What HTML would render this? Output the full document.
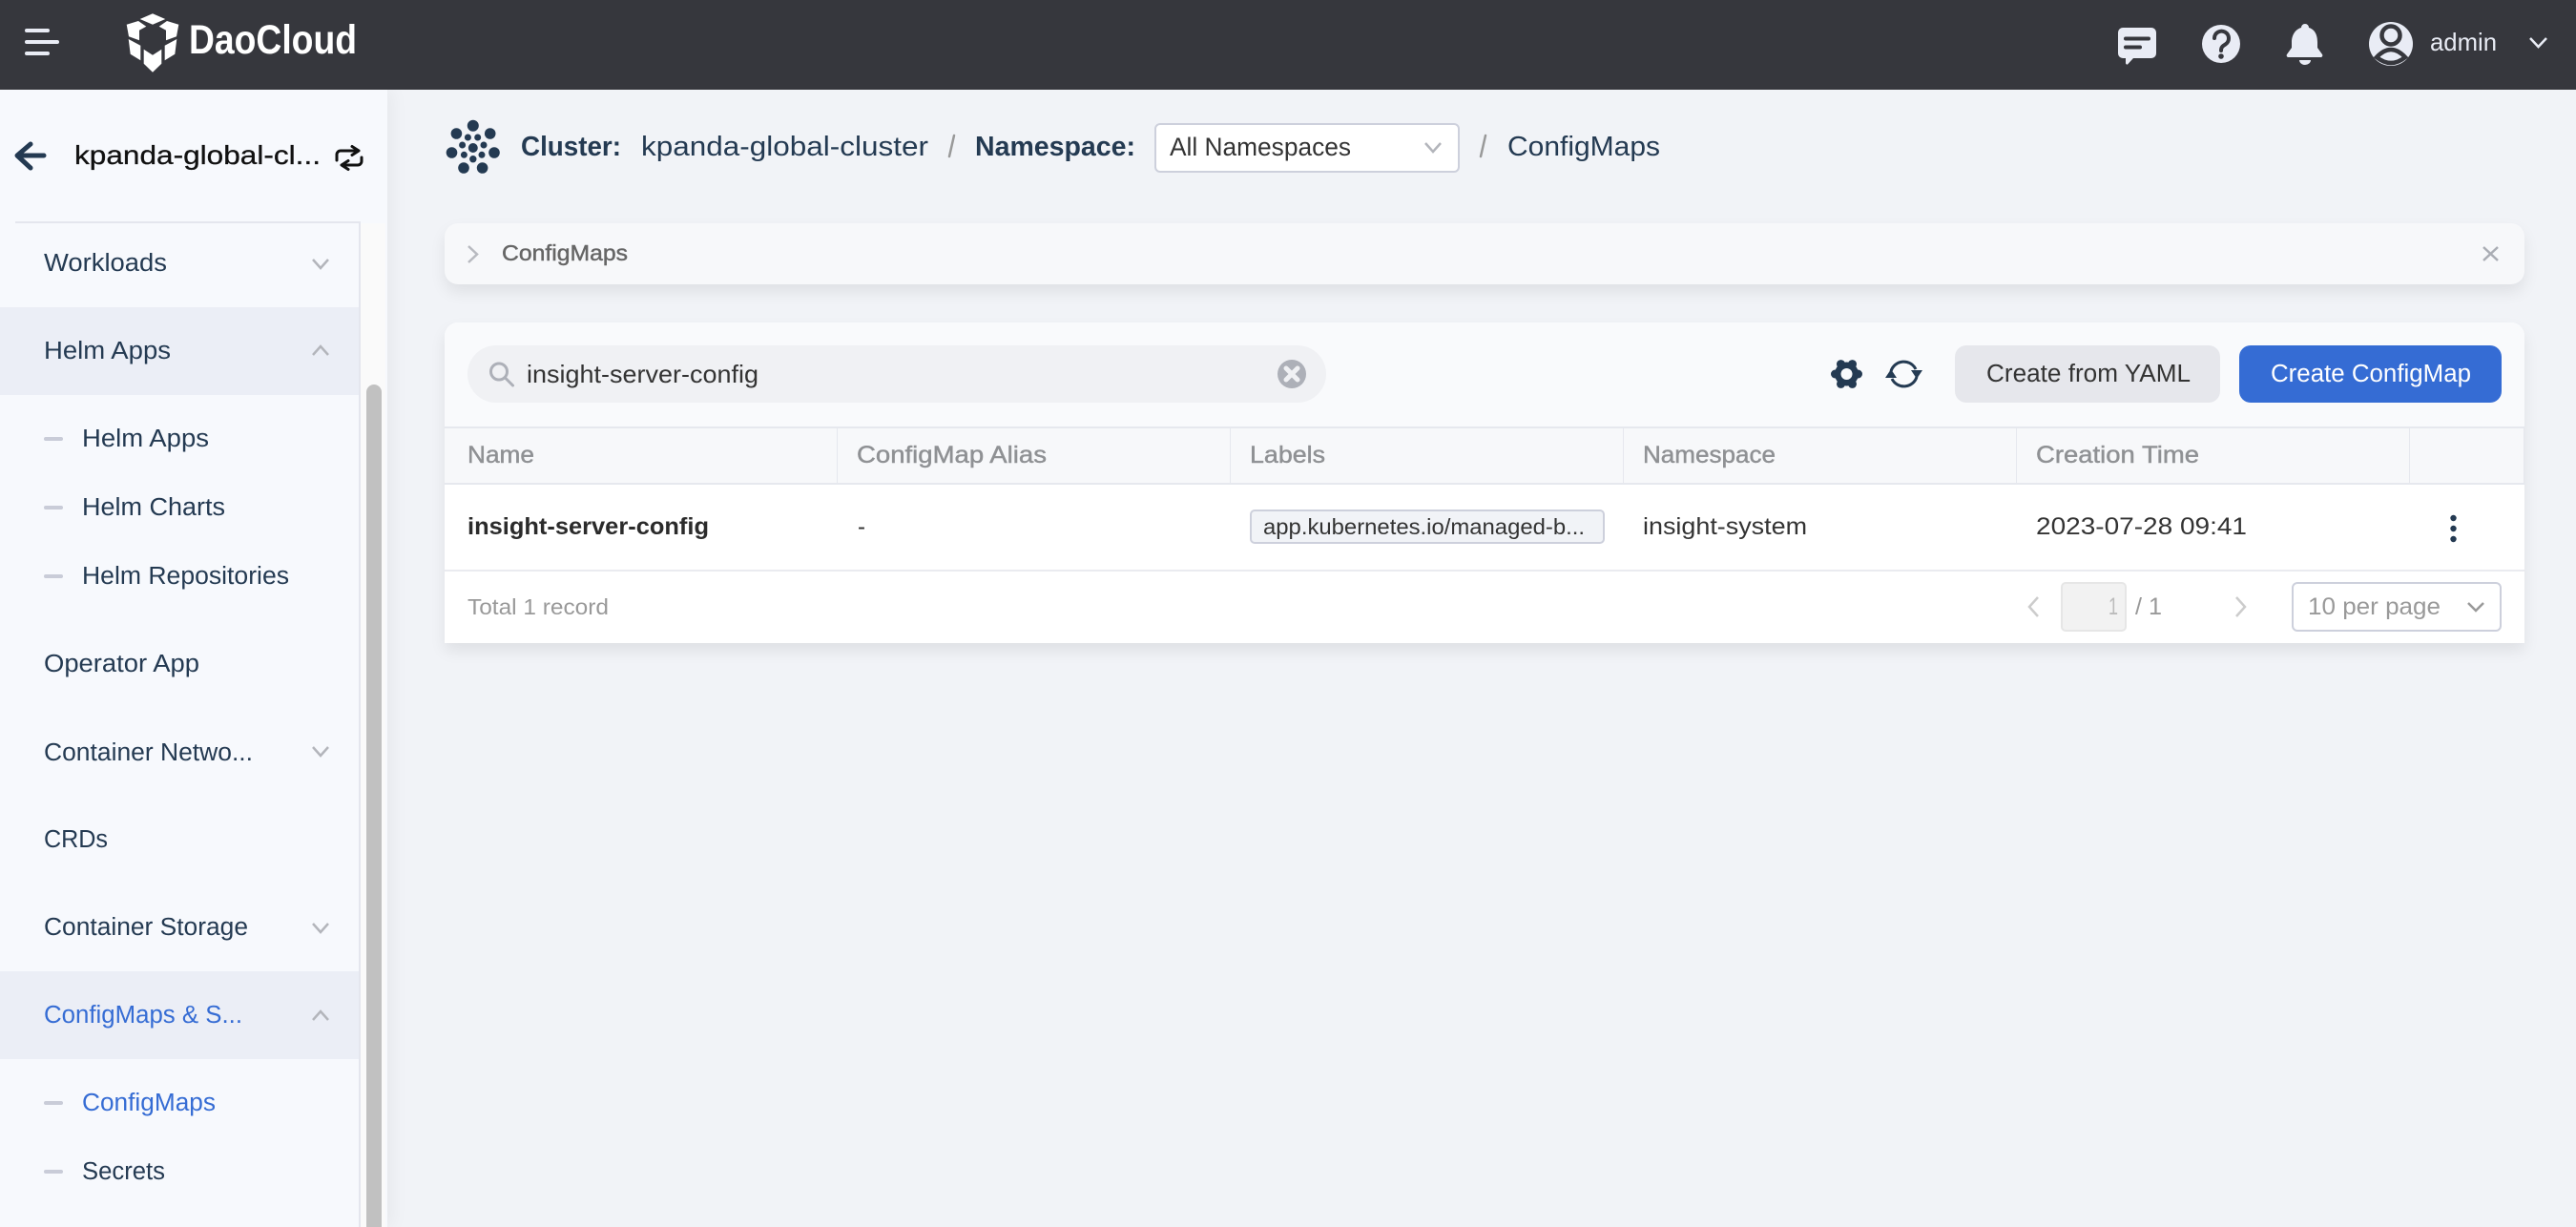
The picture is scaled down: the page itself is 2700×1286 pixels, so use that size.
<!DOCTYPE html>
<html lang="en">
<head>
<meta charset="utf-8">
<title>ConfigMaps - DaoCloud</title>
<style>
html,body{margin:0;padding:0;width:2700px;height:1286px;overflow:hidden;background:#f1f3f7}
.b{position:absolute;box-sizing:border-box}
svg{position:absolute;left:0;top:0}
text{font-family:"Liberation Sans",sans-serif;white-space:pre}
.s{font-size:25.5px;fill:#243a52}
.bl{fill:#356cd4}
.th{font-size:25px;fill:#8f9194;stroke-width:.45px;stroke:#8f9194}
.td{font-size:25px;fill:#333}
</style>
</head>
<body>
<!-- sidebar -->
<div class="b" style="left:0;top:94px;width:406px;height:1192px;background:#f7f9fd;box-shadow:4px 0 18px rgba(0,0,0,.05)"></div>
<div class="b" style="left:378px;top:234px;width:26px;height:1052px;background:#fafafa"></div>
<div class="b" style="left:16px;top:232px;width:360px;height:2px;background:#e4e6ee"></div>
<div class="b" style="left:376px;top:232px;width:2px;height:1054px;background:#e4e6ee"></div>
<div class="b" style="left:384px;top:403px;width:16px;height:883px;background:#c1c1c1;border-radius:8px 8px 0 0"></div>
<div class="b" style="left:0;top:322px;width:376px;height:92px;background:#ebeef6"></div>
<div class="b" style="left:0;top:1018px;width:376px;height:92px;background:#ebeef6"></div>
<div class="b" style="left:46px;top:458px;width:20px;height:4px;background:#c9ccd8;border-radius:2px"></div>
<div class="b" style="left:46px;top:530px;width:20px;height:4px;background:#c9ccd8;border-radius:2px"></div>
<div class="b" style="left:46px;top:602px;width:20px;height:4px;background:#c9ccd8;border-radius:2px"></div>
<div class="b" style="left:46px;top:1154px;width:20px;height:4px;background:#c9ccd8;border-radius:2px"></div>
<div class="b" style="left:46px;top:1226px;width:20px;height:4px;background:#c9ccd8;border-radius:2px"></div>
<!-- header -->
<div class="b" style="left:0;top:0;width:2700px;height:94px;background:#36373d"></div>
<!-- select -->
<div class="b" style="left:1210px;top:129px;width:320px;height:52px;background:#fff;border:2px solid #cdd0dc;border-radius:6px"></div>
<!-- alert -->
<div class="b" style="left:466px;top:234px;width:2180px;height:64px;background:#f7f8fa;border-radius:14px;box-shadow:0 8px 16px rgba(0,0,0,.08)"></div>
<!-- card -->
<div class="b" style="left:466px;top:338px;width:2180px;height:336px;background:#fff;border-radius:14px 14px 0 0;box-shadow:0 8px 16px rgba(0,0,0,.08)"></div>
<div class="b" style="left:466px;top:338px;width:2180px;height:110px;background:#f9fafc;border-radius:14px 14px 0 0"></div>
<div class="b" style="left:490px;top:362px;width:900px;height:60px;background:#f0f1f4;border-radius:30px"></div>
<div class="b" style="left:2049px;top:362px;width:278px;height:60px;background:#e6e7ec;border-radius:12px"></div>
<div class="b" style="left:2347px;top:362px;width:275px;height:60px;background:#356cd4;border-radius:12px"></div>
<!-- table head -->
<div class="b" style="left:466px;top:447px;width:2180px;height:61px;background:#f7f8fa;border-top:2px solid #e6e8ee;border-bottom:2px solid #e6e8ee"></div>
<div class="b" style="left:877px;top:449px;width:1px;height:57px;background:#e6e8ee"></div>
<div class="b" style="left:1289px;top:449px;width:1px;height:57px;background:#e6e8ee"></div>
<div class="b" style="left:1701px;top:449px;width:1px;height:57px;background:#e6e8ee"></div>
<div class="b" style="left:2113px;top:449px;width:1px;height:57px;background:#e6e8ee"></div>
<div class="b" style="left:2525px;top:449px;width:1px;height:57px;background:#e6e8ee"></div>
<div class="b" style="left:2645px;top:449px;width:1px;height:57px;background:#e6e8ee"></div>
<div class="b" style="left:466px;top:597px;width:2180px;height:2px;background:#eaebf0"></div>
<!-- tag -->
<div class="b" style="left:1310px;top:534px;width:372px;height:36px;background:#f1f3f7;border:2px solid #cdd0dc;border-radius:5px"></div>
<!-- pagination -->
<div class="b" style="left:2160px;top:610px;width:69px;height:52px;background:#f2f2f2;border:2px solid #e6e6e6;border-radius:5px"></div>
<div class="b" style="left:2402px;top:610px;width:220px;height:52px;background:#fff;border:2px solid #cdd0dc;border-radius:6px"></div>

<svg width="2700" height="1286" viewBox="0 0 2700 1286" xmlns="http://www.w3.org/2000/svg">
<!-- hamburger -->
<g stroke="#e9ecf5" stroke-width="4" stroke-linecap="round" fill="none">
<path d="M28 32H50M28 44H60M28 56H50"/>
</g>
<!-- logo -->
<g fill="#fff">
<path d="M146.700 20L160 14.300L173.300 20L160 25.700Z"/>
<path d="M132.700 25.700L145 22L153.300 27.700L146 31.700V42.300L135 38.300Z"/>
<path d="M187.300 25.700L175 22L166.700 27.700L174 31.700V42.300L185 38.300Z"/>
<path d="M134.700 41L147.300 47.700V63.300L136.700 56.700Z"/>
<path d="M185.300 41L172.700 47.700V63.300L183.300 56.700Z"/>
<path d="M150.700 51.700L160 57.700L169.300 51.700V66.700L160 75.700L150.700 66.700Z"/>
</g>
<text x="198" y="56" font-size="43" font-weight="700" fill="#fff" textLength="176" lengthAdjust="spacingAndGlyphs">DaoCloud</text>

<!-- header right -->
<path d="M2225 29H2255A5 5 0 0 1 2260 34V56A5 5 0 0 1 2255 61H2236L2230 67.500A1.500 1.500 0 0 1 2228 66V61H2225A5 5 0 0 1 2220 56V34A5 5 0 0 1 2225 29Z" fill="#e9ecf5"/>
<path d="M2228 40.500H2252M2228 49.500H2243" stroke="#36373d" stroke-width="4" stroke-linecap="round" fill="none"/>
<circle cx="2328" cy="46" r="20" fill="#e9ecf5"/>
<path d="M2321 40A7.500 7.500 0 1 1 2332.500 46.500C2329.500 48.300 2328 49.500 2328 53" stroke="#36373d" stroke-width="4" fill="none" stroke-linecap="round"/>
<circle cx="2328" cy="59" r="2.800" fill="#36373d"/>
<path d="M2416 25A4 4 0 0 1 2420 29C2427 31 2429 38 2429 44V50L2434 57A2 2 0 0 1 2433 60H2398A2 2 0 0 1 2397 57L2402 50V44C2402 38 2405 31 2412 29A4 4 0 0 1 2416 25Z" fill="#e9ecf5"/>
<path d="M2410 63H2422A6 5 0 0 1 2410 63Z" fill="#e9ecf5"/>
<circle cx="2506" cy="46" r="23" fill="#e9ecf5"/>
<circle cx="2506" cy="37" r="9.500" fill="#e9ecf5" stroke="#36373d" stroke-width="4.500"/>
<path d="M2491 60Q2506 44 2521 60Q2506 72 2491 60Z" fill="#e9ecf5" stroke="#36373d" stroke-width="4.500"/>
<text x="2547" y="53" font-size="26" fill="#e9ecf5" textLength="70" lengthAdjust="spacingAndGlyphs">admin</text>
<path d="M2652 40L2660.500 49L2669 40" stroke="#e9ecf5" stroke-width="2.500" fill="none"/>

<!-- sidebar header -->
<path d="M46 163H19M32 151L18 163L32 176" stroke="#243a52" stroke-width="5" stroke-linecap="round" stroke-linejoin="round" fill="none"/>
<text x="78" y="172" font-size="28" fill="#111" stroke="#111" stroke-width=".3" textLength="258" lengthAdjust="spacingAndGlyphs">kpanda-global-cl...</text>
<path d="M353 168V162A4 4 0 0 1 357 158H376M369 153.500L376 158L369 162.500M379 165V169A4 4 0 0 1 375 173H358M365 168.500L358 173L365 177.500" stroke="#111" stroke-width="3" fill="none" stroke-linecap="round" stroke-linejoin="round"/>

<!-- sidebar menu -->
<text class="s" x="46" y="284" textLength="129" lengthAdjust="spacingAndGlyphs">Workloads</text>
<text class="s" x="46" y="376" textLength="133" lengthAdjust="spacingAndGlyphs">Helm Apps</text>
<text class="s" x="86" y="468" textLength="133" lengthAdjust="spacingAndGlyphs">Helm Apps</text>
<text class="s" x="86" y="540" textLength="150" lengthAdjust="spacingAndGlyphs">Helm Charts</text>
<text class="s" x="86" y="612" textLength="217" lengthAdjust="spacingAndGlyphs">Helm Repositories</text>
<text class="s" x="46" y="704" textLength="163" lengthAdjust="spacingAndGlyphs">Operator App</text>
<text class="s" x="46" y="797" textLength="219" lengthAdjust="spacingAndGlyphs">Container Netwo...</text>
<text class="s" x="46" y="888" textLength="67" lengthAdjust="spacingAndGlyphs">CRDs</text>
<text class="s" x="46" y="980" textLength="214" lengthAdjust="spacingAndGlyphs">Container Storage</text>
<text class="s bl" x="46" y="1072" textLength="208" lengthAdjust="spacingAndGlyphs">ConfigMaps &amp; S...</text>
<text class="s bl" x="86" y="1164" textLength="140" lengthAdjust="spacingAndGlyphs">ConfigMaps</text>
<text class="s" x="86" y="1236" textLength="87" lengthAdjust="spacingAndGlyphs">Secrets</text>
<g stroke="#b3b5bb" stroke-width="2.500" fill="none">
<path d="M328 272L336 281L344 272"/>
<path d="M328 372L336 363L344 372"/>
<path d="M328 783L336 792L344 783"/>
<path d="M328 968L336 977L344 968"/>
<path d="M328 1069L336 1060L344 1069"/>
</g>

<!-- breadcrumb -->
<g fill="#243a52">
<circle cx="495.800" cy="131.700" r="6"/><circle cx="478.400" cy="140" r="5.800"/><circle cx="513.700" cy="140" r="5.800"/>
<circle cx="473.500" cy="160" r="5.800"/><circle cx="518" cy="160" r="5.800"/><circle cx="486" cy="176" r="5.800"/><circle cx="505.600" cy="176" r="5.800"/>
<circle cx="495.800" cy="155" r="5"/><circle cx="490.400" cy="144" r="3.500"/><circle cx="500.700" cy="144" r="3.500"/>
<circle cx="484.600" cy="152" r="3.500"/><circle cx="507" cy="152" r="3.500"/><circle cx="486.400" cy="162.300" r="3.500"/><circle cx="505" cy="162.300" r="3.500"/><circle cx="495.800" cy="166.700" r="3.700"/>
</g>
<text x="546" y="163" font-size="29" font-weight="700" fill="#243a52" textLength="105" lengthAdjust="spacingAndGlyphs">Cluster:</text>
<text x="672" y="163" font-size="29" fill="#243a52" textLength="301" lengthAdjust="spacingAndGlyphs">kpanda-global-cluster</text>
<path d="M1000 142L995 164" stroke="#999" stroke-width="2.500" stroke-linecap="round"/>
<text x="1022" y="163" font-size="29" font-weight="700" fill="#243a52" textLength="168" lengthAdjust="spacingAndGlyphs">Namespace:</text>
<text x="1226" y="163" font-size="26.500" fill="#333" textLength="190" lengthAdjust="spacingAndGlyphs">All Namespaces</text>
<path d="M1494 150L1502 159L1510 150" stroke="#b3b5bb" stroke-width="2.500" fill="none"/>
<path d="M1557 142L1552 164" stroke="#999" stroke-width="2.500" stroke-linecap="round"/>
<text x="1580" y="163" font-size="29" fill="#243a52" textLength="160" lengthAdjust="spacingAndGlyphs">ConfigMaps</text>

<!-- alert -->
<path d="M491 258L500 266.500L491 275" stroke="#b8bac0" stroke-width="2.500" fill="none"/>
<text x="526" y="273" font-size="23.500" fill="#666" stroke="#666" stroke-width=".45" textLength="132" lengthAdjust="spacingAndGlyphs">ConfigMaps</text>
<path d="M2603 259L2618 273M2618 259L2603 273" stroke="#aaadb4" stroke-width="2.500" fill="none"/>

<!-- search -->
<circle cx="523" cy="389.500" r="8.500" stroke="#adb0b8" stroke-width="3" fill="none"/>
<path d="M529.500 396L537.500 404" stroke="#adb0b8" stroke-width="3" stroke-linecap="round"/>
<text x="552" y="401" font-size="26" fill="#333" textLength="243" lengthAdjust="spacingAndGlyphs">insight-server-config</text>
<circle cx="1354" cy="392" r="15" fill="#adb0b8"/>
<path d="M1348 386L1360 398M1360 386L1348 398" stroke="#f0f1f4" stroke-width="5" stroke-linecap="round"/>

<!-- gear -->
<g fill="#243a52">
<circle cx="1935.500" cy="392" r="12.500"/>
<circle cx="1947.500" cy="392" r="4.500"/><circle cx="1923.500" cy="392" r="4.500"/>
<circle cx="1941.500" cy="381.600" r="4.500"/><circle cx="1929.500" cy="381.600" r="4.500"/>
<circle cx="1941.500" cy="402.400" r="4.500"/><circle cx="1929.500" cy="402.400" r="4.500"/>
</g>
<circle cx="1935.500" cy="392" r="6" fill="#f9fafc"/>
<!-- refresh -->
<g stroke="#243a52" stroke-width="3" fill="none">
<path d="M1982 389A14 14 0 0 1 2008 387"/>
<path d="M2009 395A14 14 0 0 1 1983 397"/>
</g>
<path d="M2003 388H2015L2009 397Z" fill="#243a52"/>
<path d="M1976 396H1988L1982 387Z" fill="#243a52"/>
<text x="2082" y="400" font-size="25.500" fill="#333" textLength="214" lengthAdjust="spacingAndGlyphs">Create from YAML</text>
<text x="2380" y="400" font-size="25.500" fill="#fff" textLength="210" lengthAdjust="spacingAndGlyphs">Create ConfigMap</text>

<!-- table head -->
<text class="th" x="490" y="485" textLength="70" lengthAdjust="spacingAndGlyphs">Name</text>
<text class="th" x="898" y="485" textLength="199" lengthAdjust="spacingAndGlyphs">ConfigMap Alias</text>
<text class="th" x="1310" y="485" textLength="79" lengthAdjust="spacingAndGlyphs">Labels</text>
<text class="th" x="1722" y="485" textLength="139" lengthAdjust="spacingAndGlyphs">Namespace</text>
<text class="th" x="2134" y="485" textLength="171" lengthAdjust="spacingAndGlyphs">Creation Time</text>

<!-- row -->
<text x="490" y="560" font-size="25" font-weight="700" fill="#2b2b2b" textLength="253" lengthAdjust="spacingAndGlyphs">insight-server-config</text>
<text class="td" x="899" y="560" textLength="8" lengthAdjust="spacingAndGlyphs">-</text>
<text x="1324" y="560" font-size="23" fill="#333" textLength="337" lengthAdjust="spacingAndGlyphs">app.kubernetes.io/managed-b...</text>
<text class="td" x="1722" y="560" textLength="172" lengthAdjust="spacingAndGlyphs">insight-system</text>
<text class="td" x="2134" y="560" textLength="221" lengthAdjust="spacingAndGlyphs">2023-07-28 09:41</text>
<circle cx="2571.500" cy="543" r="3.200" fill="#243a52"/><circle cx="2571.500" cy="554" r="3.200" fill="#243a52"/><circle cx="2571.500" cy="565" r="3.200" fill="#243a52"/>

<!-- footer -->
<text x="490" y="644" font-size="23.500" fill="#999" textLength="148" lengthAdjust="spacingAndGlyphs">Total 1 record</text>
<path d="M2136 626L2127 636L2136 646" stroke="#ccc" stroke-width="2.500" fill="none"/>
<text x="2210" y="644" font-size="25" fill="#bbb" textLength="10" lengthAdjust="spacingAndGlyphs">1</text>
<text x="2238" y="644" font-size="25" fill="#999" textLength="28" lengthAdjust="spacingAndGlyphs">/ 1</text>
<path d="M2344 626L2353 636L2344 646" stroke="#ccc" stroke-width="2.500" fill="none"/>
<text x="2419" y="644" font-size="25" fill="#999" textLength="139" lengthAdjust="spacingAndGlyphs">10 per page</text>
<path d="M2587 632L2595 640L2603 632" stroke="#999" stroke-width="2.500" fill="none"/>
</svg>
</body>
</html>
